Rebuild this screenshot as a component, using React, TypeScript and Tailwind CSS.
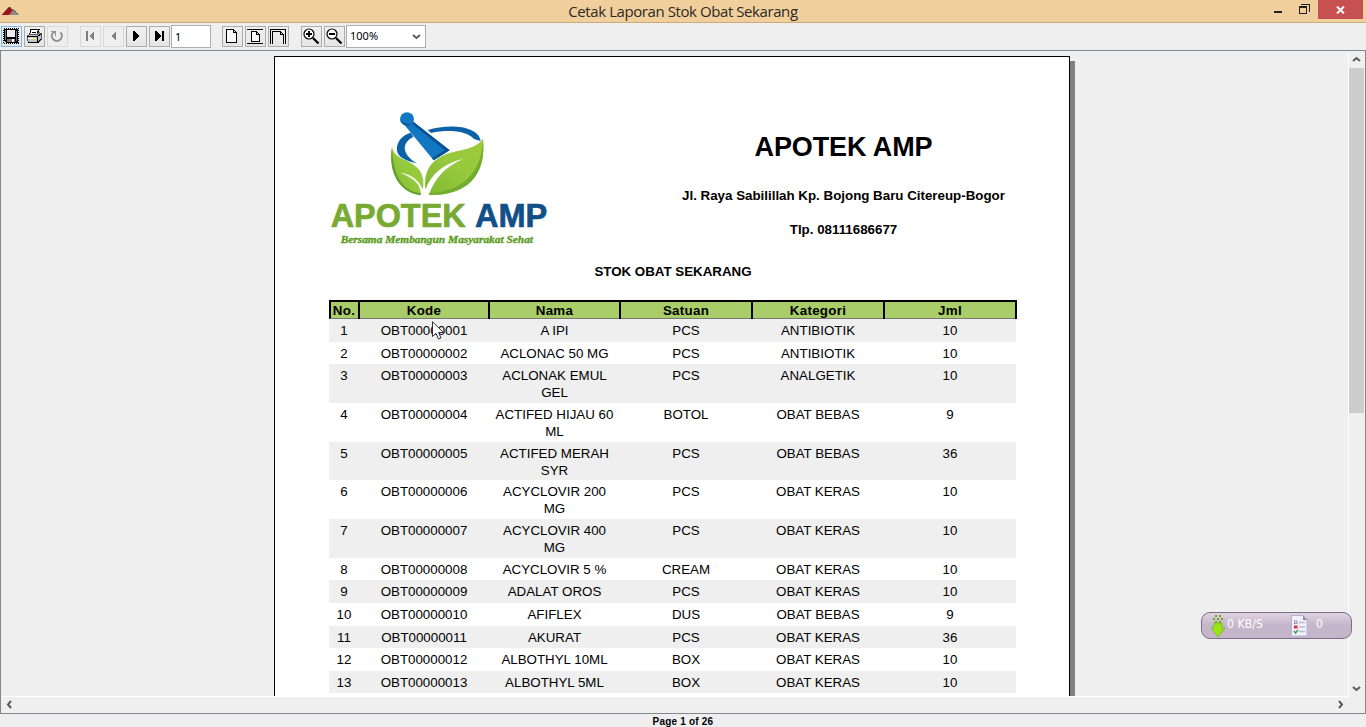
import React from "react";

type Row = { h: string; shade: boolean; cells: string[] };

const rows: Row[] = [
  { h: "h-[23px]", shade: true, cells: ["1", "OBT00000001", "A IPI", "PCS", "ANTIBIOTIK", "10"] },
  { h: "h-[22px]", shade: false, cells: ["2", "OBT00000002", "ACLONAC 50 MG", "PCS", "ANTIBIOTIK", "10"] },
  { h: "h-[39px]", shade: true, cells: ["3", "OBT00000003", "ACLONAK EMUL\nGEL", "PCS", "ANALGETIK", "10"] },
  { h: "h-[39px]", shade: false, cells: ["4", "OBT00000004", "ACTIFED HIJAU 60\nML", "BOTOL", "OBAT BEBAS", "9"] },
  { h: "h-[38px]", shade: true, cells: ["5", "OBT00000005", "ACTIFED MERAH\nSYR", "PCS", "OBAT BEBAS", "36"] },
  { h: "h-[39px]", shade: false, cells: ["6", "OBT00000006", "ACYCLOVIR 200\nMG", "PCS", "OBAT KERAS", "10"] },
  { h: "h-[39px]", shade: true, cells: ["7", "OBT00000007", "ACYCLOVIR 400\nMG", "PCS", "OBAT KERAS", "10"] },
  { h: "h-[22px]", shade: false, cells: ["8", "OBT00000008", "ACYCLOVIR 5 %", "CREAM", "OBAT KERAS", "10"] },
  { h: "h-[23px]", shade: true, cells: ["9", "OBT00000009", "ADALAT OROS", "PCS", "OBAT KERAS", "10"] },
  { h: "h-[23px]", shade: false, cells: ["10", "OBT00000010", "AFIFLEX", "DUS", "OBAT BEBAS", "9"] },
  { h: "h-[22px]", shade: true, cells: ["11", "OBT00000011", "AKURAT", "PCS", "OBAT KERAS", "36"] },
  { h: "h-[23px]", shade: false, cells: ["12", "OBT00000012", "ALBOTHYL 10ML", "BOX", "OBAT KERAS", "10"] },
  { h: "h-[22px]", shade: true, cells: ["13", "OBT00000013", "ALBOTHYL 5ML", "BOX", "OBAT KERAS", "10"] },
];

const columns = "grid grid-cols-[30px_130px_131px_132px_132px_132px]";

function ToolButton({ children, state = "normal", className = "" }: { children: React.ReactNode; state?: "normal" | "disabled" | "focused"; className?: string }) {
  const border =
    state === "focused" ? "border-[#7eb4ea]" : state === "disabled" ? "border-[#d9d9d9]" : "border-[#acacac]";
  const fill = state === "disabled" ? "bg-[#efefef]" : "bg-linear-to-b from-[#f0f0f0] to-[#e5e5e5]";
  return (
    <button className={`flex h-[21px] w-[21px] shrink-0 items-center justify-center border ${border} ${fill} ${className}`}>
      <svg width="19" height="19" viewBox="0 0 19 19" shapeRendering="crispEdges">
        {children}
      </svg>
    </button>
  );
}

function Chevron({ d }: { d: string }) {
  return (
    <svg width="9" height="9" viewBox="0 0 9 9" fill="none" stroke="#5a5a5a" strokeWidth="2">
      <path d={d} />
    </svg>
  );
}

function TitleBar() {
  return (
    <header className="flex h-[23px] shrink-0 justify-between border-b border-[#c9ab7c] bg-[#f0cf9c]">
      <div className="w-[160px] pt-[6px] pl-[2px]">
        <svg width="17" height="10" viewBox="0 0 17 10">
          <path d="M0 9 L7 1 L8 1 L11 5 L8 9 Z" fill="#a8101a" />
          <path d="M7 9 L11 4 L16 9 Z" fill="#8a8a8a" />
          <path d="M0 9 L7 1.500 H8 L10 4 H12 L16.500 9" fill="none" stroke="#26202a" strokeDasharray="2 .5" />
        </svg>
      </div>
      <h1 className="font-['Open_Sans','Noto_Sans',sans-serif] text-[15px] leading-[23px] tracking-[-0.42px] text-[#2c2a26]">
        Cetak Laporan Stok Obat Sekarang
      </h1>
      <div className="flex w-[160px] justify-end pr-[3px]">
        <svg width="45" height="19" viewBox="0 0 45 19" shapeRendering="crispEdges">
          <rect x="1" y="11" width="8" height="2" fill="#222" />
          <path d="M28 4.500 H36.500 V12" fill="none" stroke="#222" />
          <rect x="26.500" y="6.500" width="7" height="7" fill="none" stroke="#222" />
          <rect x="26" y="6" width="8" height="2" fill="#222" />
        </svg>
        <div className="flex h-[19px] w-[45px] items-center justify-center bg-[#c75050]">
          <svg width="9" height="8" viewBox="0 0 9 8" stroke="#fff" strokeWidth="1.900">
            <path d="M1 .5 L8 7.500 M8 .5 L1 7.500" />
          </svg>
        </div>
      </div>
    </header>
  );
}

function Glass({ plus }: { plus: boolean }) {
  return (
    <g fill="none" stroke="#000" shapeRendering="auto">
      <circle cx="7" cy="7" r="5" fill="#fff" strokeWidth="1.200" />
      <path d="M4 7 H10" strokeWidth="2" />
      {plus && <path d="M7 4 V10" strokeWidth="2" />}
      <path d="M11 11 L16.500 16.500" strokeWidth="2.300" />
    </g>
  );
}

function Toolbar() {
  return (
    <div className="flex h-[27px] shrink-0 items-center pl-px font-['Noto_Sans','Open_Sans',sans-serif] text-[11px] text-black">
      <ToolButton state="focused" className="mr-[2px]">
        <rect x="1.500" y="1.500" width="15" height="15" fill="none" stroke="#000" strokeDasharray="1 1" />
        <path d="M2 2 H16 V16 H4 L2 14 Z" fill="#000" />
        <rect x="5" y="3" width="8" height="7" fill="#e9eef2" />
        <rect x="3" y="3" width="1" height="10" fill="#66717a" />
        <rect x="14" y="4" width="1" height="10" fill="#66717a" />
        <rect x="5" y="12" width="8" height="3" fill="#777" />
        <rect x="10" y="12" width="2" height="3" fill="#fff" />
      </ToolButton>
      <ToolButton className="mr-[2px]">
        <path d="M6 2.500 H14 L11 9 H4 Z" fill="#fff" stroke="#000" />
        <path d="M7 5 H11 M6 7 H10" stroke="#000" />
        <path d="M2 9 L5 7.500 H12 L14 5.500 L16.500 7 V12 L13 15.500 H4 L2 13 Z" fill="#c4c4c4" stroke="#555" />
        <path d="M2 9.500 H12 V15 M12 10 L16 7 M3 15.500 H13 L16 12" fill="none" stroke="#000" />
        <rect x="3" y="11" width="8" height="1" fill="#fff" />
        <rect x="8" y="12" width="3" height="1" fill="#e9db29" />
      </ToolButton>
      <ToolButton state="disabled" className="mr-[12px]">
        <path d="M5.200 5.500 A5 5 0 1 0 12.500 5.500" fill="none" stroke="#8f8f8f" strokeWidth="2" shapeRendering="auto" />
        <path d="M3 4 H8 V9 H7 V6 H5 V5 H3 Z" fill="#8f8f8f" />
      </ToolButton>
      <ToolButton state="disabled" className="mr-[2px]">
        <path d="M5 4 h2 v10 h-2 Z M13 4 V14 L8 9 Z" fill="#808080" />
      </ToolButton>
      <ToolButton state="disabled" className="mr-[2px]">
        <path d="M12 4 V14 L7 9 Z" fill="#808080" />
      </ToolButton>
      <ToolButton className="mr-[2px]">
        <path d="M6 4 H7 L12 9 L7 14 H6 Z" fill="#000" />
      </ToolButton>
      <ToolButton className="mr-px">
        <path d="M5 4 H6 L11 9 L6 14 H5 Z M12 4 h2 v10 h-2 Z" fill="#000" />
      </ToolButton>
      <div className="mr-[11px] h-[23px] w-[40px] border border-[#abadb3] bg-white pl-[3px] leading-[21px]">1</div>
      <ToolButton className="mr-[2px]">
        <path d="M3.500 2.500 H10.500 L13.500 5.500 V15.500 H3.500 Z M10.500 2.500 V5.500 H13.500" fill="#f8f8f8" stroke="#000" />
      </ToolButton>
      <ToolButton className="mr-[2px]">
        <path d="M1 2.500 H17 M1 16.500 H17" stroke="#000" />
        <path d="M5.500 4.500 H10.500 L13.500 7.500 V14.500 H5.500 Z M10.500 4.500 V7.500 H13.500" fill="#f8f8f8" stroke="#000" />
      </ToolButton>
      <ToolButton className="mr-[12px]">
        <path d="M1.500 17 V2.500 H16.500 V17 M3.500 17 V4.500 H11.500 L14.500 7.500 V17 M11.500 4.500 V7.500 H14.500" fill="none" stroke="#000" />
      </ToolButton>
      <ToolButton className="mr-[2px]"><Glass plus /></ToolButton>
      <ToolButton className="mr-px"><Glass plus={false} /></ToolButton>
      <div className="flex h-[23px] w-[80px] items-center justify-between border border-[#abadb3] bg-white pr-[4px] pl-[3px]">
        <span>100%</span>
        <Chevron d="M1 3 L4.500 6 L8 3" />
      </div>
    </div>
  );
}

function Logo() {
  return (
    <svg width="240" height="150" viewBox="0 0 720 450">
      <defs>
        <linearGradient id="leaf" x1="0" y1="1" x2="1" y2="0">
          <stop offset="0" stopColor="#7db832" />
          <stop offset=".5" stopColor="#96c93d" />
          <stop offset="1" stopColor="#9fcb3b" />
        </linearGradient>
      </defs>
      <path d="M323 90 C385 70 476 76 482 123 L462 117 C440 92 385 88 333 99 Z" fill="#0c62a8" />
      <path d="M273 98 C232 108 216 155 247 174 C260 184 277 187 291 190 C252 168 238 132 280 111 Z" fill="#0c62a8" />
      <path d="M254 76 L281 66 L389 151 L341 181 Z" fill="#1277c2" />
      <path d="M281 66 L389 151 L341 181 L336 175 L374 151 L274 69 Z" fill="#0a5191" />
      <ellipse cx="261" cy="57" rx="21" ry="20" fill="#1278c3" />
      <path d="M241 60 C247 77 264 82 276 70 C262 74 249 70 241 60" fill="#0b559a" />
      <path d="M216 142 C204 216 238 280 303 285 C302 258 291 237 240 218 C276 223 295 239 309 269 C315 225 299 202 271 188 C244 174 222 169 216 142 Z" fill="url(#leaf)" />
      <path d="M216 142 C204 216 238 280 303 285 L302 280 C242 272 220 225 216 142 Z" fill="#619e2c" />
      <path d="M489 116 C457 165 370 137 328 201 C316 220 314 243 316 269 C333 224 369 191 428 177 C374 203 349 230 326 285 C439 287 500 229 489 116 Z" fill="url(#leaf)" />
      <path d="M326 285 C439 287 500 229 489 116 C487 213 430 275 329 279 Z" fill="#72ad2f" />
      <g fontFamily="'Liberation Sans', Arial, sans-serif" fontWeight="700" fontSize="98">
        <text x="32" y="382" textLength="405" lengthAdjust="spacingAndGlyphs" fill="#78aa32" stroke="#78aa32" strokeWidth="2">APOTEK</text>
        <text x="465" y="382" textLength="217" lengthAdjust="spacingAndGlyphs" fill="#114f88" stroke="#114f88" strokeWidth="2">AMP</text>
      </g>
      <text x="62" y="428" textLength="577" lengthAdjust="spacingAndGlyphs" fill="#5d9c25" stroke="#5d9c25" strokeWidth="1" fontFamily="'Liberation Serif', serif" fontStyle="italic" fontWeight="700" fontSize="29">
        Bersama Membangun Masyarakat Sehat
      </text>
    </svg>
  );
}

function StockTable() {
  const headings = ["No.", "Kode", "Nama", "Satuan", "Kategori", "Jml"];
  return (
    <section className="mt-[20px] w-[688px] text-center">
      <div className={`${columns} h-[19px] border-t-2 border-b border-l-2 border-t-black border-b-[#777] border-l-black bg-[#a8cd69] text-[13.33px] leading-[17px] font-bold`}>
        {headings.map((t) => (
          <div key={t} className="-ml-px mr-px border-r-2 border-black tracking-[0.3px]">{t}</div>
        ))}
      </div>
      {rows.map((r) => (
        <div key={r.cells[0]} className={`${columns} ${r.h} w-[687px] ${r.shade ? "bg-[#efefef]" : ""} pt-[3px] text-[13.33px] leading-[17px]`}>
          {r.cells.map((c, i) => (
            <div key={i} className="whitespace-pre">{c}</div>
          ))}
        </div>
      ))}
    </section>
  );
}

function ReportPage() {
  return (
    <div className="ml-[273px] flex h-[700px] w-[801px] shrink-0 pt-[5px]">
      <article className="w-[796px] border border-black bg-white pt-[43px] pl-[54px] text-black">
        <div className="flex h-[150px]">
          <div className="-ml-[9px] w-[240px] shrink-0"><Logo /></div>
          <div className="ml-[82px] w-[403px] pt-[30px] text-center font-bold">
            <h2 className="text-[27px] leading-[34px] tracking-[-0.1px]">APOTEK AMP</h2>
            <p className="mt-[23px] text-[13.33px] leading-[17px]">Jl. Raya Sabilillah Kp. Bojong Baru Citereup-Bogor</p>
            <p className="mt-[17px] text-[13.33px] leading-[17px]">Tlp. 08111686677</p>
          </div>
        </div>
        <h3 className="mt-[13px] w-[688px] text-center text-[13.33px] leading-[17px] font-bold">STOK OBAT SEKARANG</h3>
        <StockTable />
      </article>
      <div className="mt-[5px] w-[5px] bg-[#808080]" />
    </div>
  );
}

function NetworkWidget() {
  return (
    <aside className="absolute top-[612px] left-[1201px] flex h-[27px] w-[151px] items-center rounded-[9px] border border-[#7c6c85] bg-linear-to-b from-[#dfd3e2] via-[#c5b5ca] to-[#c5b5ca] font-['DejaVu_Sans_Condensed','Noto_Sans',sans-serif] text-[12px] text-white">
      <svg className="ml-[8px]" width="16" height="24" viewBox="0 0 16 24">
        <path d="M5 1h2v2H5z M9 1h2v2H9z M3 4h2v2H3z M7 4h2v2H7z M11 4h2v2h-2z M5 7h2v2H5z M9 7h2v2H9z" fill="#69aa18" />
        <path d="M4 9 H12 V14 H15 L8 23 L1 14 H4 Z" fill="#9be313" stroke="#7fbb35" />
      </svg>
      <span className="mb-[3px] ml-px w-[40px] text-[12px] tracking-[0.1px]">0 KB/S</span>
      <svg className="ml-[24px]" width="17" height="22" viewBox="0 0 17 22">
        <path d="M.5 .5 H12 L16 5 V21 H.5 Z" fill="#f2f0fa" stroke="#b7b0d0" />
        <path d="M12 .5 V5 H16 Z" fill="#8f88bd" />
        <path d="M8 7.500 H14 M8 12 H14 M8 16.500 H14" stroke="#bdb8d6" strokeWidth="1.500" />
        <rect x="3.500" y="6" width="2.500" height="2.500" fill="none" stroke="#9993b0" />
        <rect x="3" y="10.500" width="3.500" height="3" fill="#dd3345" />
        <path d="M3 16 L4.500 18 L7 15" fill="none" stroke="#39a04b" strokeWidth="1.500" />
      </svg>
      <span className="mb-[3px] ml-[8px]">0</span>
    </aside>
  );
}

export default function App() {
  return (
    <main className="relative flex h-[727px] w-[1366px] flex-col overflow-hidden bg-[#efefef] font-['Liberation_Sans',Arial,sans-serif]">
      <TitleBar />
      <Toolbar />
      <div className="flex h-[664px] shrink-0 flex-col border border-[#828790]">
        <div className="flex h-[646px] shrink-0">
          <div className="h-[646px] w-[1348px] shrink-0 overflow-hidden border-r border-b border-white">
            <ReportPage />
          </div>
          <div className="flex w-[15px] flex-col items-center">
            <div className="flex h-[17px] items-center"><Chevron d="M1 6 L4.500 3 L8 6" /></div>
            <div className="h-[345px] w-[15px] bg-[#cdcdcd]" />
            <div className="mt-auto flex h-[17px] items-center"><Chevron d="M1 3 L4.500 6 L8 3" /></div>
          </div>
        </div>
        <div className="flex h-[14px] items-center justify-between pr-[20px] pl-[4px]">
          <Chevron d="M6 1 L3 4.500 L6 8" />
          <Chevron d="M3 1 L6 4.500 L3 8" />
        </div>
      </div>
      <footer className="h-[13px] text-center text-[10px] leading-[15px] font-bold tracking-[0.2px] text-black">Page 1 of 26</footer>
      <NetworkWidget />
      <svg className="absolute top-[321px] left-[432px]" width="13" height="20" viewBox="0 0 13 20">
        <path d="M.5 .8 V15.500 L4 12.300 L6.500 18 L9 17 L6.600 11.500 H11.500 Z" fill="#fff" stroke="#1c1c2b" strokeWidth=".9" />
      </svg>
    </main>
  );
}
